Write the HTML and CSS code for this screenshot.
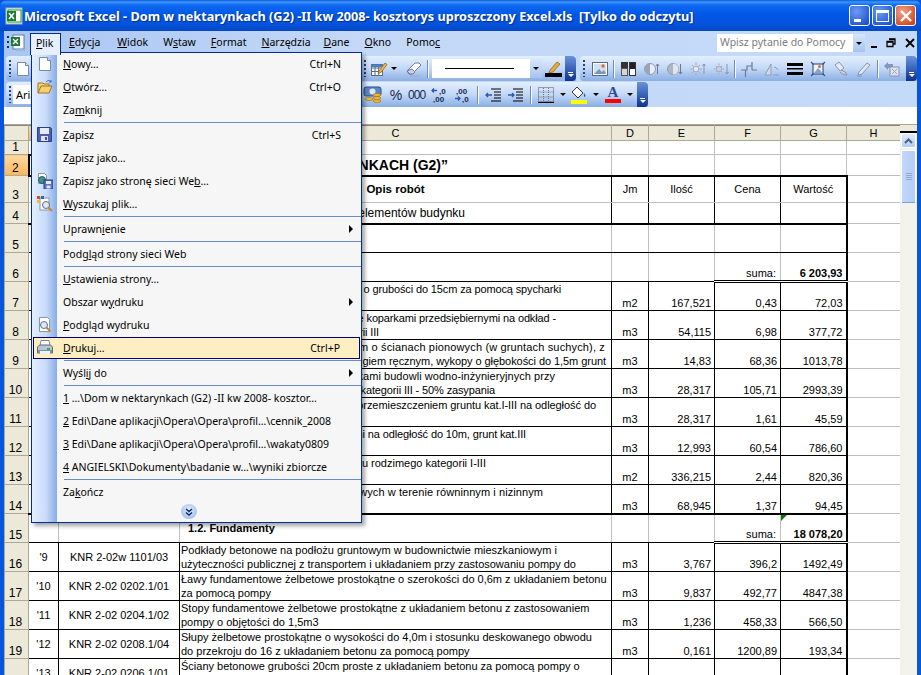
FILE: index.html
```html
<!DOCTYPE html>
<html lang="pl">
<head>
<meta charset="utf-8">
<title>Microsoft Excel</title>
<link rel="stylesheet" href="styles.css">
</head>
<body>
<div class="window">
  <header class="titlebar">
    <svg class="t-ico" width="18" height="18" viewBox="0 0 18 18"><rect x="1" y="1" width="16" height="16" fill="#e8f4e8" stroke="#9fb8a8"/><rect x="3" y="3" width="13" height="12" fill="#fff" stroke="#2d8a3e"/><rect x="2" y="4" width="9" height="10" fill="#1d7a34"/><path d="M4 6l5 6M9 6l-5 6" stroke="#fff" stroke-width="1.6"/></svg>
    <span class="t-text">Microsoft Excel - Dom w nektarynkach (G2) -II kw 2008- kosztorys uproszczony Excel.xls&nbsp; [Tylko do odczytu]</span>
    <span class="wbtns">
      <span class="wbtn"><i class="w-min"></i></span>
      <span class="wbtn"><i class="w-max"></i></span>
      <span class="wbtn wclose"><svg width="14" height="14" viewBox="0 0 14 14"><path d="M2 2l10 10M12 2L2 12" stroke="#fff" stroke-width="2.4"/></svg></span>
    </span>
  </header>

  <nav class="menubar">
    <svg class="m-ico" width="20" height="20" viewBox="0 0 20 20"><path d="M1 3v2M1 8v2M1 13v2" stroke="#10306e" stroke-width="2" stroke-dasharray="2 1"/><rect x="6" y="2" width="11" height="14" fill="#fff" stroke="#5a7fa8"/><rect x="4" y="4" width="9" height="9" fill="#1d7a34"/><path d="M6 6l5 5M11 6l-5 5" stroke="#fff" stroke-width="1.4"/><path d="M9 16h9v2H9z" fill="#9fb6d8"/></svg>
    <span class="mi open"><u>P</u>lik</span>
    <span class="mi mi-ed"><u>E</u>dycja</span>
    <span class="mi"><u>W</u>idok</span>
    <span class="mi">W<u>s</u>taw</span>
    <span class="mi"><u>F</u>ormat</span>
    <span class="mi mi-na"><u>N</u>arzędzia</span>
    <span class="mi"><u>D</u>ane</span>
    <span class="mi"><u>O</u>kno</span>
    <span class="mi">Pomo<u>c</u></span>
    <span class="helpbox"><span class="help-text">Wpisz pytanie do Pomocy</span><span class="help-drop"><i class="tri"></i></span></span>
    <span class="docbtns">
      <i class="d-min"></i>
      <svg width="10" height="10" viewBox="0 0 10 10"><path d="M3 1h6v5H7M1 3.5h6v5H1z" fill="none" stroke="#000" stroke-width="1.3"/><path d="M3 1.5h6M1 4h6" stroke="#000" stroke-width="1.6"/></svg>
      <svg width="10" height="10" viewBox="0 0 10 10"><path d="M1 1l8 8M9 1L1 9" stroke="#000" stroke-width="1.8"/></svg>
    </span>
  </nav>

  <div class="tbrow">
    <div class="tb tb-a">
      <span class="grip"></span>
      <svg class="i16 new" width="16" height="16" viewBox="0 0 16 16"><path d="M2.500 1.500h8l3 3v10h-11z" fill="#fff" stroke="#7a8ba5"/><path d="M10.500 1.500v3h3" fill="#d7e2f2" stroke="#7a8ba5"/></svg>
      <span class="grip g-line"></span>
      <svg class="i16 tpen" width="18" height="18" viewBox="0 0 18 18"><rect x="1.500" y="4.500" width="11" height="11" fill="#fff" stroke="#5b6b84"/><path d="M1.500 8h11M1.500 11.500h11M5 4.500v11M8.700 4.500v11" stroke="#5b6b84"/><path d="M1.500 4.500h11V7h-11z" fill="#4c7bc7"/><path d="M9 11l6-8 2 1.500-6 8-3 1z" fill="#f2b544" stroke="#8a5a16" stroke-width=".7"/></svg>
      <i class="tri t-gap"></i>
      <svg class="i16 erase" width="18" height="16" viewBox="0 0 18 16"><path d="M2 10l8-8h4l2 2-9 9H4z" fill="#fff" stroke="#6e7f9a"/><path d="M2 10l3 3h3l2-2-3-3z" fill="#c9d4e6" stroke="#6e7f9a"/><path d="M5 15h10" stroke="#9aaac4"/></svg>
      <span class="sep"></span>
      <span class="linebox"><span class="lineval"></span><span class="help-drop linedrop"><i class="tri"></i></span></span>
      <svg class="i16 pen" width="17" height="17" viewBox="0 0 17 17"><path d="M5 10l7-8 3 2-7 8-4 1z" fill="#e6a93c" stroke="#8b5d1a" stroke-width=".7"/><rect x="0" y="13" width="17" height="4" fill="#000"/></svg>
      <span class="chev"><i class="chev-dash"></i><i class="tri white"></i></span>
    </div>
    <div class="tb tb-b">
      <span class="grip"></span>
      <svg class="i16" width="16" height="16" viewBox="0 0 16 16"><rect x=".500" y="1.500" width="15" height="13" fill="#fff" stroke="#556a8a"/><rect x="2" y="3" width="12" height="10" fill="#cfe0f3"/><path d="M2 13l5-5 3 3 2-2 2 4z" fill="#7d96b5"/><circle cx="11" cy="5" r="1.700" fill="#e2682f"/></svg>
      <span class="sep"></span>
      <svg class="i16" width="17" height="16" viewBox="0 0 17 16"><rect x="1" y="1" width="7" height="14" fill="#555"/><rect x="1" y="1" width="7" height="6" fill="#333"/><rect x="2" y="8" width="5" height="6" fill="#d5d5d5"/><rect x="9.500" y="1.500" width="6" height="13" fill="#fff" stroke="#333"/><rect x="10" y="2" width="5" height="6" fill="#222"/></svg>
      <svg class="i16 dis" width="16" height="16" viewBox="0 0 16 16"><circle cx="6" cy="8" r="5.500" fill="#e9eef6" stroke="#8f9cb0"/><path d="M6 2.500a5.500 5.500 0 000 11z" fill="#9aa4b5"/><path d="M13.500 13V3M11.800 5l1.700-2 1.700 2" stroke="#6b7a92" fill="none"/></svg>
      <svg class="i16 dis" width="16" height="16" viewBox="0 0 16 16"><circle cx="6" cy="8" r="5.500" fill="#aeb6c4" stroke="#8f9cb0"/><path d="M6 2.500a5.500 5.500 0 010 11z" fill="#dfe5ee"/><path d="M13.500 3v10M11.800 11l1.700 2 1.700-2" stroke="#6b7a92" fill="none"/></svg>
      <svg class="i16 dis" width="16" height="16" viewBox="0 0 16 16"><circle cx="6" cy="8" r="2.800" fill="#e4e8ef" stroke="#a5adbb"/><path d="M6 1.500v2.500M6 12v2.500M0 8h2.500M9.500 8H12M2 4l1.700 1.700M10 4L8.300 5.700M2 12l1.700-1.700M10 12l-1.700-1.700" stroke="#a5adbb"/><path d="M14 13V3M12.500 5L14 3l1.500 2" stroke="#8795aa" fill="none"/></svg>
      <svg class="i16 dis" width="16" height="16" viewBox="0 0 16 16"><circle cx="6" cy="8" r="2.800" fill="#c9ced8" stroke="#a5adbb"/><path d="M6 2.500V4M6 12v1.500M1 8h1.500M9.500 8H11M2.800 4.800l1 1M9.200 4.800l-1 1M2.800 11.200l1-1M9.200 11.200l-1-1" stroke="#a5adbb"/><path d="M14 3v10M12.500 11l1.500 2 1.500-2" stroke="#8795aa" fill="none"/></svg>
      <span class="sep"></span>
      <svg class="i16" width="16" height="16" viewBox="0 0 16 16"><path d="M0 9h6V5h5V1M4.500 16v-7M11 9h5M11 5v4" stroke="#6d7a90" stroke-width="1.200" fill="none"/></svg>
      <svg class="i16 dis" width="16" height="16" viewBox="0 0 16 16"><path d="M1 14L7 3v11z" fill="#d3dae6" stroke="#909db2"/><path d="M9 14h6M10 6a5 5 0 014 3" stroke="#909db2" fill="none"/></svg>
      <svg class="i16" width="16" height="16" viewBox="0 0 16 16"><rect y="2" width="16" height="3" fill="#000"/><rect y="7" width="16" height="1.500" fill="#000"/><rect y="11" width="16" height="3" fill="#000"/></svg>
      <svg class="i16" width="16" height="16" viewBox="0 0 16 16"><path d="M1 1l3 3M15 1l-3 3M1 15l3-3M15 15l-3-3" stroke="#2a5aa8" stroke-width="1.300"/><rect x="3" y="3" width="10" height="10" fill="#eef3fb" stroke="#1f3f78"/><path d="M4 12l4-5 3 3 1 2z" fill="#8aa2c4"/><circle cx="9.500" cy="5.500" r="1.500" fill="#e2682f"/></svg>
      <svg class="i16 dis" width="16" height="16" viewBox="0 0 16 16"><path d="M2 4l4-3 5 6-4 3z" fill="#e6ebf3" stroke="#8a97ad"/><path d="M8 9c3 1 5 2 6 5-3 0-5-1-7-3" fill="#c4cddc" stroke="#8a97ad"/></svg>
      <svg class="i16 dis" width="16" height="16" viewBox="0 0 16 16"><path d="M2 14l1-3 8-9 3 2-8 9z" fill="#dfe5ee" stroke="#8a97ad"/><path d="M1 15h5" stroke="#8a97ad"/></svg>
      <span class="sep"></span>
      <svg class="i16 dis" width="16" height="16" viewBox="0 0 16 16"><path d="M0 5l4-4v2h5v4H4v2z" fill="#8098bd"/><rect x="6" y="6" width="9" height="9" fill="#dde3ec" stroke="#8a97ad"/><path d="M8 8l5 5M13 8l-5 5" stroke="#9eaabd"/></svg>
      <span class="chev"><i class="chev-dash"></i><i class="tri white"></i></span>
    </div>
  </div>

  <div class="tbrow">
    <div class="tb tb-c">
      <span class="grip"></span>
      <span class="fontbox">Arial</span>
      <svg class="i16 euro" width="20" height="18" viewBox="0 0 20 18"><rect x="1" y="1" width="17" height="9" rx="2" fill="#5c86c5" stroke="#29528f"/><ellipse cx="9.500" cy="5.500" rx="3" ry="3" fill="#dbe7f7"/><g fill="#f0b93a" stroke="#a9761a" stroke-width=".7"><ellipse cx="14" cy="9" rx="4" ry="1.500"/><ellipse cx="14" cy="12" rx="4" ry="1.500"/><ellipse cx="14" cy="15" rx="4" ry="1.500"/><ellipse cx="6" cy="13" rx="4" ry="1.500"/></g></svg>
      <span class="tbt pct">%</span>
      <span class="tbt zeros">000</span>
      <svg class="i16" width="17" height="16" viewBox="0 0 17 16"><path d="M7 3.500H2M4 1.500l-2 2 2 2" stroke="#2a5aa8" fill="none" stroke-width="1.300"/><text x="9" y="6.500" class="ntxt">,0</text><text x="3" y="15" class="ntxt">,00</text></svg>
      <svg class="i16" width="17" height="16" viewBox="0 0 17 16"><text x="3" y="6.500" class="ntxt">,00</text><text x="9" y="15" class="ntxt">,0</text><path d="M2 11.500h5M5 9.500l2 2-2 2" stroke="#2a5aa8" fill="none" stroke-width="1.300"/></svg>
      <span class="sep"></span>
      <svg class="i16" width="16" height="16" viewBox="0 0 16 16"><path d="M6 2h10M9 5h7M9 8h7M9 11h7M6 14h10" stroke="#000"/><path d="M7 8H1M3 6L1 8l2 2" stroke="#2a5aa8" fill="none" stroke-width="1.300"/></svg>
      <svg class="i16" width="16" height="16" viewBox="0 0 16 16"><path d="M6 2h10M9 5h7M9 8h7M9 11h7M6 14h10" stroke="#000"/><path d="M1 8h6M5 6l2 2-2 2" stroke="#2a5aa8" fill="none" stroke-width="1.300"/></svg>
      <span class="sep"></span>
      <svg class="i16" width="16" height="16" viewBox="0 0 16 16"><rect x=".500" y=".500" width="15" height="14" fill="none" stroke="#555" stroke-dasharray="1 1"/><path d="M.500 5h15M.500 10h15M5.500 1v14M10.500 1v14" stroke="#777" stroke-dasharray="1 1"/><path d="M0 15.500h16" stroke="#000"/></svg>
      <i class="tri t-gap2"></i>
      <svg class="i16" width="16" height="18" viewBox="0 0 16 18"><path d="M6 1l6 6-5 5-6-6z" fill="#fff" stroke="#333"/><path d="M13 7c1.500 2 2 3 1 4-1 0-1.500-2-1-4z" fill="#2a5aa8"/><rect y="14" width="16" height="4" fill="#ff0"/></svg>
      <i class="tri t-gap2"></i>
      <span class="fontA"><span class="a-l">A</span><i class="a-bar"></i></span>
      <i class="tri t-gap2"></i>
      <span class="chev"><i class="chev-dash"></i><i class="tri white"></i></span>
    </div>
  </div>

  <div class="formula"></div>

  <main class="workarea">
    <div class="gridarea">
      <table class="sheet">
        <colgroup><col class="c0"><col class="ca"><col class="cb"><col class="cc"><col class="cd"><col class="ce"><col class="cf"><col class="cg"><col class="ch"></colgroup>
        <thead>
          <tr class="colhead"><th></th><th class="on">A</th><th>B</th><th>C</th><th>D</th><th>E</th><th>F</th><th>G</th><th>H</th></tr>
        </thead>
        <tbody>
          <tr class="h14"><th>1</th><td></td><td></td><td></td><td></td><td></td><td></td><td></td><td></td></tr>
          <tr class="h21"><th class="on">2</th><td class="sel"></td><td></td><td class="frag big"><span class="off-title">NKACH (G2)”</span></td><td></td><td></td><td></td><td></td><td></td></tr>
          <tr class="h27 hd"><th>3</th><td></td><td></td><td class="ctr b opis">Opis robót</td><td class="ctr">Jm</td><td class="ctr">Ilość</td><td class="ctr">Cena</td><td class="ctr gr">Wartość</td><td class="nb"></td></tr>
          <tr class="h21 hd hd2"><th>4</th><td></td><td></td><td class="frag mid"><span class="off-a">elementów budynku</span></td><td></td><td></td><td></td><td class="gr"></td><td class="nb"></td></tr>
          <tr class="h29 sec"><th>5</th><td></td><td></td><td></td><td></td><td></td><td></td><td class="gr"></td><td></td></tr>
          <tr class="h29 sec"><th>6</th><td></td><td></td><td></td><td></td><td></td><td class="num sum dbl">suma:</td><td class="num b gr dbl">6 203,93</td><td></td></tr>
          <tr class="h29 it"><th>7</th><td></td><td></td><td class="frag"><span class="off-b">o grubości do 15cm za pomocą spycharki</span></td><td class="unit">m2</td><td class="num">167,521</td><td class="num">0,43</td><td class="num gr">72,03</td><td class="pl"></td></tr>
          <tr class="h29 it"><th>8</th><td></td><td></td><td class="frag"><span class="off-c">e koparkami przedsiębiernymi na odkład -</span><span class="off-d">rii III</span></td><td class="unit">m3</td><td class="num">54,115</td><td class="num">6,98</td><td class="num gr">377,72</td><td class="pl"></td></tr>
          <tr class="h29 it"><th>9</th><td></td><td></td><td class="frag"><span class="off-e">m o ścianach pionowych (w gruntach suchych), z</span><span class="off-f">giem ręcznym, wykopy o głębokości do 1,5m grunt</span></td><td class="unit">m3</td><td class="num">14,83</td><td class="num">68,36</td><td class="num gr">1013,78</td><td class="pl"></td></tr>
          <tr class="h29 it"><th>10</th><td></td><td></td><td class="frag"><span class="off-g">kami budowli wodno-inżynieryjnych przy</span><span class="off-h">kategorii III - 50% zasypania</span></td><td class="unit">m3</td><td class="num">28,317</td><td class="num">105,71</td><td class="num gr">2993,39</td><td class="pl"></td></tr>
          <tr class="h29 it"><th>11</th><td></td><td></td><td class="frag"><span class="off-i">przemieszczeniem gruntu kat.I-III na odległość do</span></td><td class="unit">m3</td><td class="num">28,317</td><td class="num">1,61</td><td class="num gr">45,59</td><td class="pl"></td></tr>
          <tr class="h29 it"><th>12</th><td></td><td></td><td class="frag"><span class="off-j">ni na odległość do 10m, grunt kat.III</span></td><td class="unit">m3</td><td class="num">12,993</td><td class="num">60,54</td><td class="num gr">786,60</td><td class="pl"></td></tr>
          <tr class="h29 it"><th>13</th><td></td><td></td><td class="frag"><span class="off-k">ntu rodzimego kategorii I-III</span></td><td class="unit">m2</td><td class="num">336,215</td><td class="num">2,44</td><td class="num gr">820,36</td><td class="pl"></td></tr>
          <tr class="h29 it last"><th>14</th><td></td><td></td><td class="frag"><span class="off-l">wych w terenie równinnym i nizinnym</span></td><td class="unit">m3</td><td class="num">68,945</td><td class="num">1,37</td><td class="num gr">94,45</td><td class="pl"></td></tr>
          <tr class="h29 sec"><th>15</th><td></td><td></td><td class="b subh">1.2. Fundamenty</td><td></td><td></td><td class="num sum dbl">suma:</td><td class="num b gr dbl flag">18 078,20</td><td></td></tr>
          <tr class="h29 it"><th>16</th><td class="ctr">'9</td><td class="ctr">KNR 2-02w 1101/03</td><td class="txt">Podkłady betonowe na podłożu gruntowym w budownictwie mieszkaniowym i<br>użyteczności publicznej z transportem i układaniem przy zastosowaniu pompy do</td><td class="unit">m3</td><td class="num">3,767</td><td class="num">396,2</td><td class="num gr">1492,49</td><td class="pl"></td></tr>
          <tr class="h29 it"><th>17</th><td class="ctr">'10</td><td class="ctr">KNR 2-02 0202.1/01</td><td class="txt">Ławy fundamentowe żelbetowe prostokątne o szerokości do 0,6m z układaniem betonu<br>za pomocą pompy</td><td class="unit">m3</td><td class="num">9,837</td><td class="num">492,77</td><td class="num gr">4847,38</td><td class="pl"></td></tr>
          <tr class="h29 it"><th>18</th><td class="ctr">'11</td><td class="ctr">KNR 2-02 0204.1/02</td><td class="txt">Stopy fundamentowe żelbetowe prostokątne z układaniem betonu z zastosowaniem<br>pompy o objętości do 1,5m3</td><td class="unit">m3</td><td class="num">1,236</td><td class="num">458,33</td><td class="num gr">566,50</td><td class="pl"></td></tr>
          <tr class="h29 it"><th>19</th><td class="ctr">'12</td><td class="ctr">KNR 2-02 0208.1/04</td><td class="txt">Słupy żelbetowe prostokątne o wysokości do 4,0m i stosunku deskowanego obwodu<br>do przekroju do 16 z układaniem betonu za pomocą pompy</td><td class="unit">m3</td><td class="num">0,161</td><td class="num">1200,89</td><td class="num gr">193,34</td><td class="pl"></td></tr>
          <tr class="h29 it"><th></th><td class="ctr">'13</td><td class="ctr">KNR 2-02 0206.1/01</td><td class="txt">Ściany betonowe grubości 20cm proste z układaniem betonu za pomocą pompy o</td><td class="unit"></td><td></td><td></td><td class="gr"></td><td class="pl"></td></tr>
        </tbody>
      </table>
    </div>
    <aside class="vscroll">
      <span class="split"></span>
      <span class="sbtn"><svg width="9" height="6" viewBox="0 0 9 6"><path d="M1 5l3.500-3.500L8 5" fill="none" stroke="#4d6185" stroke-width="2"/></svg></span>
      <span class="thumb"><i></i><i></i><i></i><i></i></span>
    </aside>
  </main>
</div>

<div class="menu">
  <div class="item"><span class="ico"><svg width="16" height="16" viewBox="0 0 16 16"><path d="M2.500 1.500h8l3 3v10h-11z" fill="#fff" stroke="#7a8ba5"/><path d="M10.500 1.500v3h3" fill="#d7e2f2" stroke="#7a8ba5"/></svg></span><span class="lbl"><u>N</u>owy…</span><span class="key">Ctrl+N</span></div>
  <div class="item"><span class="ico"><svg width="16" height="15" viewBox="0 0 16 15"><path d="M1 14V4h5l1 1h5v2" fill="#f2d58a" stroke="#a0761f"/><path d="M1 14l3-7h11l-3 7z" fill="#f6cf6e" stroke="#a0761f"/><path d="M9 3c2-2 4-2 5 0M14 1v2h-2" fill="none" stroke="#3f6fbe"/></svg></span><span class="lbl"><u>O</u>twórz…</span><span class="key">Ctrl+O</span></div>
  <div class="item"><span class="ico"></span><span class="lbl">Za<u>m</u>knij</span></div>
  <div class="msep"></div>
  <div class="item"><span class="ico"><svg width="15" height="15" viewBox="0 0 15 15"><path d="M.500.500h13l1 1v13H.500z" fill="#4a5fb8" stroke="#2e3f86"/><rect x="3" y="1" width="9" height="6" fill="#e7ecf8"/><rect x="4" y="9" width="7" height="5" fill="#dfe3ee"/><rect x="8" y="10" width="2" height="3" fill="#3e4f9c"/></svg></span><span class="lbl"><u>Z</u>apisz</span><span class="key">Ctrl+S</span></div>
  <div class="item"><span class="ico"></span><span class="lbl">Z<u>a</u>pisz jako…</span></div>
  <div class="item"><span class="ico"><svg width="16" height="16" viewBox="0 0 16 16"><path d="M1.500 .500h6l2 2v8h-8z" fill="#fff" stroke="#8896ad"/><circle cx="5" cy="7" r="3.500" fill="#3f9a6a" stroke="#27579a"/><rect x="7" y="7" width="9" height="9" fill="#5b72c2" stroke="#2e3f86"/><rect x="9" y="8" width="5" height="3" fill="#e7ecf8"/><rect x="9.500" y="12.500" width="4" height="3" fill="#dfe3ee"/></svg></span><span class="lbl">Zapisz jako stronę sieci We<u>b</u>…</span></div>
  <div class="item"><span class="ico"><svg width="16" height="16" viewBox="0 0 16 16"><rect x="3" y="2" width="9" height="12" fill="#fff" stroke="#8896ad"/><rect x="0" y="0" width="3" height="3" fill="#e2491f"/><rect x="4" y="0" width="3" height="3" fill="#2a66c4"/><rect x="0" y="4" width="3" height="3" fill="#f0b93a"/><circle cx="9" cy="9" r="3.500" fill="#dfe9f6" stroke="#5c6f8c"/><path d="M11.500 11.500l3.500 3.500" stroke="#c9862a" stroke-width="2"/></svg></span><span class="lbl"><u>W</u>yszukaj plik…</span></div>
  <div class="msep"></div>
  <div class="item"><span class="ico"></span><span class="lbl">Uprawn<u>i</u>enie</span><i class="arr"></i></div>
  <div class="msep"></div>
  <div class="item"><span class="ico"></span><span class="lbl">Podg<u>l</u>ąd strony sieci Web</span></div>
  <div class="msep"></div>
  <div class="item"><span class="ico"></span><span class="lbl"><u>U</u>stawienia strony…</span></div>
  <div class="item"><span class="ico"></span><span class="lbl">Obszar w<u>y</u>druku</span><i class="arr"></i></div>
  <div class="item"><span class="ico"><svg width="16" height="16" viewBox="0 0 16 16"><path d="M2.500 .500h8l2 2v12h-10z" fill="#fff" stroke="#8896ad"/><circle cx="7" cy="8" r="3.500" fill="#dfe9f6" stroke="#5c6f8c"/><path d="M9.500 10.500l4 4" stroke="#c9862a" stroke-width="2"/></svg></span><span class="lbl"><u>P</u>odgląd wydruku</span></div>
  <div class="item hot"><span class="ico"><svg width="16" height="15" viewBox="0 0 16 15"><path d="M4 .500h8l1 5H3z" fill="#fff" stroke="#7d8797"/><path d="M.500 7l2-2h11l2 2v6h-15z" fill="#b9c4d4" stroke="#5d6b80"/><path d="M1 10h14v3H1z" fill="#7f8ea6"/><rect x="10" y="8" width="3" height="2" fill="#3fae3f"/><rect x="3" y="11" width="10" height="3" fill="#eef1f6"/></svg></span><span class="lbl"><u>D</u>rukuj…</span><span class="key">Ctrl+P</span></div>
  <div class="msep"></div>
  <div class="item"><span class="ico"></span><span class="lbl">Wyśl<u>i</u>j do</span><i class="arr"></i></div>
  <div class="msep"></div>
  <div class="item"><span class="ico"></span><span class="lbl"><u>1</u> …\Dom w nektarynkach (G2) -II kw 2008- kosztor…</span></div>
  <div class="item"><span class="ico"></span><span class="lbl"><u>2</u> Edi\Dane aplikacji\Opera\Opera\profil…\cennik_2008</span></div>
  <div class="item"><span class="ico"></span><span class="lbl"><u>3</u> Edi\Dane aplikacji\Opera\Opera\profil…\wakaty0809</span></div>
  <div class="item"><span class="ico"></span><span class="lbl"><u>4</u> ANGIELSKI\Dokumenty\badanie w…\wyniki zbiorcze</span></div>
  <div class="msep"></div>
  <div class="item"><span class="ico"></span><span class="lbl">Za<u>k</u>ończ</span></div>
  <div class="more"><span class="ico"></span><span class="morebtn"><svg width="8" height="8" viewBox="0 0 8 8"><path d="M1 1l3 2.500L7 1M1 4.500L4 7l3-2.500" fill="none" stroke="#10306e" stroke-width="1.500"/></svg></span></div>
</div>
</body>
</html>
```

FILE: styles.css
```css
* { box-sizing: border-box; }
html, body { margin: 0; padding: 0; height: 100%; overflow: hidden; }
body { background: #0855dd; font-family: "Noto Sans", "Liberation Sans", sans-serif; font-size: 10.5px; color: #000; }
.window { width: 921px; height: 675px; display: flex; flex-direction: column; position: relative; background: #0855dd; padding: 0 4px; }

/* title bar */
.titlebar { height: 31px; margin: 0 -4px; display: flex; align-items: center; padding: 0 5px; color: #fff;
  background: linear-gradient(#0a5bd8 0, #3d95ff 2px, #0f6af0 5px, #0058e8 14px, #0453dd 24px, #0447c4 31px); border-radius: 7px 7px 0 0; }
.t-ico { flex: none; margin-right: 1px; }
.t-text { font: bold 12.7px "Noto Sans", sans-serif; white-space: pre; text-shadow: 1px 1px 1px #0a2f8a; }
.wbtns { margin-left: auto; display: flex; gap: 2px; }
.wbtn { width: 21px; height: 21px; border: 1px solid #fff; border-radius: 3px; background: radial-gradient(circle at 35% 30%, #6d9bf5, #2a5fd8 70%, #1d49b8); display: flex; align-items: center; justify-content: center; position: relative; }
.wclose { background: radial-gradient(circle at 35% 30%, #eda48c, #dc5a34 65%, #b83b1b); }
.w-min { width: 7px; height: 3px; background: #fff; margin-top: 9px; margin-right: 4px; }
.w-max { width: 13px; height: 12px; border: 1px solid #fff; border-top-width: 3px; }

/* menu bar */
.menubar { height: 24px; display: flex; align-items: center; background: linear-gradient(90deg, #a9c5f2, #c4d9f7 40%, #c4daf9); padding-left: 3px; }
.m-ico { flex: none; margin-right: 3px; }
.mi { padding: 0 6px; margin-right: 3px; white-space: nowrap; height: 22px; line-height: 21px; }
.mi-ed { margin-right: 5px; }
.mi-na { margin-right: 1px; }
.mi.open { background: #e6effc; border: 1px solid #002d96; border-bottom: 0; width: 31px; padding: 0 5px; margin-top: 1px; line-height: 19px; height: 22px; margin-right: 2px; position: relative; z-index: 6; }
.helpbox { margin-left: auto; width: 148px; height: 18px; background: #fff; display: flex; align-items: stretch; color: #7c7c7c; padding-left: 3px; }
.help-text { flex: 1; line-height: 17px; white-space: nowrap; }
.help-drop { width: 12px; background: linear-gradient(#d7e6fb, #a6c4f0); display: flex; align-items: center; justify-content: center; }
.tri { width: 0; height: 0; border: 3px solid transparent; border-top: 3px solid #000; border-bottom: 0; display: inline-block; flex: none; }
.tri.white { border-top-color: #fff; }
.docbtns { display: flex; align-items: center; gap: 9px; width: 52px; padding-left: 6px; }
.d-min { width: 6px; height: 2px; background: #000; margin-top: 8px; }

/* toolbars */
.tbrow { height: 26px; display: flex; gap: 4px; background: linear-gradient(90deg, #a9c5f2, #c4d9f7 40%, #c4daf9); padding-left: 2px; }
.tb { height: 25px; margin-top: 1px; display: flex; align-items: center; background: linear-gradient(#e3effe, #c3d8f6 50%, #8aaee4); border-radius: 4px 0 0 4px; padding-left: 1px; position: relative; }
.tb-a { width: 571px; }
.tb-b { width: 337px; gap: 7px; }
.tb-c { width: 642px; }
.grip { width: 2px; height: 17px; flex: none; margin-left: 2px; background: repeating-linear-gradient(#27417a 0 2px, transparent 2px 4px); }
.g-line { margin-left: 333px; }
.i16 { flex: none; margin-left: 6px; }
.tb-a .new { margin-left: 4px; }
.tb-a .tpen { margin-left: 4px; }
.t-gap { margin-left: 3px; }
.t-gap2 { margin-left: 6px; margin-right: -1px; }
.tb-a .erase { margin-left: 8px; }
.sep { width: 1px; height: 18px; background: #6a8ccb; border-right: 1px solid #fff; flex: none; box-sizing: content-box; }
.tb-a .sep { margin: 0 3px 0 4px; }
.tb-b .sep { margin: 0 -2px; }
.tb-c .sep { margin: 0 0 0 7px; }
.linebox { width: 110px; height: 19px; background: #fff; display: flex; align-items: stretch; flex: none; }
.lineval { flex: 1; position: relative; }
.lineval::after { content: ""; position: absolute; left: 13px; width: 69px; top: 9px; height: 1px; background: #000; }
.linedrop { width: 12px; }
.tb-a .pen { margin-left: 3px; }
.chev { position: absolute; right: 0; top: 0; width: 11px; height: 25px; background: linear-gradient(#6a93dd, #0c338f); border-radius: 0 4px 4px 0; display: flex; flex-direction: column; align-items: center; justify-content: flex-end; padding-bottom: 4px; gap: 1px; }
.chev-dash { width: 5px; height: 1px; background: #fff; }
.tb-b .i16 { margin-left: 0; }
.fontbox { width: 86px; height: 19px; background: #fff; margin-left: 2px; flex: none; font: 11px "Noto Sans", sans-serif; line-height: 19px; padding-left: 3px; overflow: hidden; }
.tb-c .euro { margin-left: 264px; }
.tbt { flex: none; color: #1b2a4c; width: 16px; text-align: center; }
.pct { margin-left: 5px; font: 14px "Liberation Sans", sans-serif; }
.zeros { margin-left: 4px; font: 12px "Liberation Sans", sans-serif; letter-spacing: -.9px; }
.ntxt { font: bold 8px "Liberation Sans", sans-serif; fill: #1b2a4c; }
.fontA { display: flex; flex-direction: column; align-items: center; width: 16px; margin-left: 7px; flex: none; }
.a-l { font: bold 15px/13px "Liberation Serif", serif; color: #2b4b9a; }
.a-bar { width: 16px; height: 4px; background: #f00; }

.formula { height: 18px; background: #fff; flex: none; border-bottom: 1px solid #aca899; }

/* sheet */
.workarea { flex: 1; min-height: 0; display: flex; background: #fff; }
.gridarea { width: 896px; overflow: hidden; }
.sheet { border-collapse: collapse; table-layout: fixed; width: 896px; font: 11px "Liberation Sans", sans-serif; }
.c0 { width: 24px; } .ca { width: 30px; } .cb { width: 121px; } .cc { width: 432px; } .cd { width: 37px; } .ce { width: 66px; } .cf { width: 66px; } .cg { width: 66px; } .ch { width: 54px; }
.sheet th { background: #ece9d8; font-weight: normal; border: 1px solid #aca899; padding: 0 2px 0 0; text-align: center; vertical-align: bottom; font-size: 12px; line-height: 13px; }
.sheet th.on { background: linear-gradient(#ffd9a0, #fbb55c); }
.colhead th { height: 15px; vertical-align: middle; border-top-color: #8a8678; font-size: 11px; padding: 0; }
.sheet td { border: 1px solid #c0c0c0; padding: 0 2px; white-space: nowrap; overflow: hidden; vertical-align: bottom; line-height: 14px; }
.h14 { height: 14px; } .h21 { height: 21px; } .h27 { height: 27px; } .h29 { height: 29px; }

.sel { border-left: 2px solid #000 !important; border-top: 2px solid #000 !important; }
.ctr { text-align: center; vertical-align: middle !important; }
.b { font-weight: bold; }
.opis { font-size: 11.5px; }
.sheet .num { text-align: right; padding-right: 3px; }
.unit { text-align: center; }
.sheet .sum { padding-right: 4px; }
.sheet .frag { vertical-align: top; }
.sheet .big { font-size: 14px; font-weight: bold; vertical-align: middle; line-height: 16px; }
.sheet .mid { font-size: 12px; vertical-align: middle; }
.subh { padding-left: 8px !important; vertical-align: middle !important; }
.sheet .txt { vertical-align: top; padding-left: 1px; }

/* cell fragments: the beginning of each line lies under the open menu, so each is anchored by its right end */
.frag span { display: block; text-align: right; }
.it .frag span { letter-spacing: -.13px; }
.it .frag .off-e { letter-spacing: .15px; }
.it .frag .off-f { letter-spacing: -.06px; }
.it .frag .off-g { letter-spacing: .05px; }
.it .frag .off-i { letter-spacing: -.07px; }
.it .frag .off-k { letter-spacing: 0; }
.it .frag .off-l { letter-spacing: .08px; }
.off-title { padding-right: 161px; }
.off-a { padding-right: 144px; }
.off-b { padding-right: 48px; }
.off-c { padding-right: 53px; }
.off-d { padding-right: 230px; }
.off-e { padding-right: 4px; }
.off-f { padding-right: 3px; }
.off-g { padding-right: 54px; }
.off-h { padding-right: 114px; }
.off-i { padding-right: 13px; }
.off-j { padding-right: 83px; }
.off-k { padding-right: 123px; }
.off-l { padding-right: 66px; }

/* header rows */
.hd td { border-top: 2px solid #000; border-right: 1px solid #000; }
.hd .nb { border-top: 1px solid #c0c0c0; border-right: 1px solid #c0c0c0; }
.hd.hd2 td { border-top: 1px solid #c0c0c0; border-bottom: 2px solid #000; }
.hd.hd2 .nb { border-bottom: 1px solid #c0c0c0; }
.sec td { border-bottom: 1px solid #000; }
.sec td:last-child { border-bottom: 1px solid #c0c0c0; }
.it td { border: 1px solid #000; }
.it .pl { border: 1px solid #c0c0c0; border-left: 2px solid #000; }
.it.last td { border-bottom: 2px solid #000; }
.it.last .pl { border-bottom: 1px solid #c0c0c0; }
.sheet .gr { border-right: 2px solid #000; }
.sheet .dbl { border-bottom: 3px double #000; }
.flag { position: relative; }
.flag::before { content: ""; position: absolute; left: 0; top: 0; border: 3px solid transparent; border-left-color: #0a7a0a; border-top-color: #0a7a0a; }

/* scrollbar */
.vscroll { width: 17px; background: #f4f2ec; display: flex; flex-direction: column; align-items: center; }
.split { width: 17px; height: 8px; background: #ece9d8; border-bottom: 2px solid #000; flex: none; }
.sbtn { width: 15px; height: 15px; border: 1px solid #fff; border-radius: 2px; background: linear-gradient(#e0ebfd, #b3cbf4); display: flex; align-items: center; justify-content: center; }
.thumb { width: 15px; height: 53px; margin-top: 2px; border-radius: 2px; border: 1px solid #fff; border-bottom-color: #7f9ee0; background: linear-gradient(90deg, #c4d6fa, #b5cbf8); display: flex; flex-direction: column; align-items: center; justify-content: center; gap: 1px; }
.thumb i { width: 6px; height: 1px; background: #8fa9e0; }

/* open menu */
.menu { position: absolute; left: 31px; top: 52px; width: 331px; height: 471px; background: linear-gradient(90deg, #e3efff 0, #c8dbfa 14px, #87ace5 25px, #f6f6f6 25px); border: 1px solid #002d96; box-shadow: 3px 3px 4px rgba(0,0,0,.35); z-index: 5; }
.item { height: 23px; display: flex; align-items: center; white-space: nowrap; position: relative; padding-bottom: 2px; }
.ico { width: 25px; flex: none; display: flex; align-items: center; justify-content: center; }
.lbl { margin-left: 6px; }
.key { margin-left: auto; margin-right: 20px; }
.arr { position: absolute; right: 8px; top: 7px; width: 0; height: 0; border: 4px solid transparent; border-left: 4px solid #000; border-right: 0; }
.msep { height: 2px; margin-left: 32px; border-top: 1px solid #6a8ccb; }
.hot { background: #ffeec2; box-shadow: inset 0 0 0 1px #000080; width: 327px; height: 22px; margin: 0 1px 1px; padding-bottom: 1px; }
.hot .ico { width: 24px; }
.more { display: flex; height: 17px; }
.morebtn { width: 16px; height: 15px; border-radius: 50%; background: radial-gradient(circle at 50% 40%, #e5eefc, #8fb0e6); margin-left: 124px; display: flex; align-items: center; justify-content: center; }
```
